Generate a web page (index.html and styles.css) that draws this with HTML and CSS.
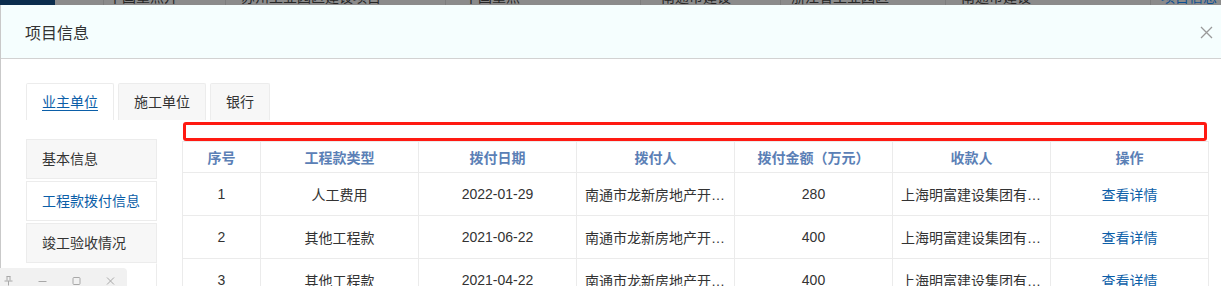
FILE: index.html
```html
<!DOCTYPE html>
<html lang="zh">
<head>
<meta charset="utf-8">
<title>项目信息</title>
<link rel="stylesheet" href="styles.css">
</head>
<body>
<div class="bg-bar">
  <div class="bg-logo"></div>
  <div class="bg-cell bg-icon"><span class="bg-dash"></span></div>
  <div class="bg-cell"><span>中国重点开</span></div>
  <div class="bg-cell"><span>苏州工业园区建设项目</span></div>
  <div class="bg-cell"><span>中国重点</span></div>
  <div class="bg-cell"><span>南通市建设</span></div>
  <div class="bg-cell"><span>浙江省工业园区</span></div>
  <div class="bg-cell"><span>南通市建设</span></div>
  <div class="bg-cell bg-link"><span>项目信息</span></div>
</div>

<div class="modal">
  <div class="modal-header">
    <span class="modal-title">项目信息</span>
    <span class="modal-close">
      <svg width="13" height="13" viewBox="0 0 13 13"><path d="M1 1L12 12M12 1L1 12" stroke="#9a9a9a" stroke-width="1.3" fill="none"/></svg>
    </span>
  </div>
  <div class="modal-body">
    <div class="tabs">
      <div class="tab tab-active"><span>业主单位</span></div>
      <div class="tab">施工单位</div>
      <div class="tab">银行</div>
    </div>
    <div class="content">
      <ul class="side-menu">
        <li class="menu-item">基本信息</li>
        <li class="menu-item menu-active">工程款拨付信息</li>
        <li class="menu-item">竣工验收情况</li>
        <li class="menu-item menu-blank"></li>
      </ul>
      <div class="table-wrap">
        <div class="highlight"></div>
        <table class="data-table">
          <colgroup>
            <col class="c-idx"><col class="c-w"><col class="c-w"><col class="c-w"><col class="c-w"><col class="c-w"><col class="c-w">
          </colgroup>
          <thead>
            <tr>
              <th>序号</th><th>工程款类型</th><th>拨付日期</th><th>拨付人</th><th>拨付金额（万元）</th><th>收款人</th><th>操作</th>
            </tr>
          </thead>
          <tbody>
            <tr>
              <td>1</td><td>人工费用</td><td>2022-01-29</td><td><div class="ellip">南通市龙新房地产开发有限公司</div></td><td>280</td><td><div class="ellip">上海明富建设集团有限公司</div></td><td><a class="link">查看详情</a></td>
            </tr>
            <tr>
              <td>2</td><td>其他工程款</td><td>2021-06-22</td><td><div class="ellip">南通市龙新房地产开发有限公司</div></td><td>400</td><td><div class="ellip">上海明富建设集团有限公司</div></td><td><a class="link">查看详情</a></td>
            </tr>
            <tr>
              <td>3</td><td>其他工程款</td><td>2021-04-22</td><td><div class="ellip">南通市龙新房地产开发有限公司</div></td><td>400</td><td><div class="ellip">上海明富建设集团有限公司</div></td><td><a class="link">查看详情</a></td>
            </tr>
          </tbody>
        </table>
      </div>
    </div>
  </div>
</div>

<div class="win-toolbar">
  <span class="win-btn"><svg width="9" height="10" viewBox="0 0 9 10"><path d="M2.5 0.5H6.5M3 0.5V4.5M6 0.5V4.5M0.5 5H8.5M4.5 5V9.5" stroke="#a8a8a8" stroke-width="1" fill="none"/></svg></span>
  <span class="win-btn"><svg width="9" height="10" viewBox="0 0 9 10"><path d="M0.5 5.5H8.5" stroke="#a8a8a8" stroke-width="1" fill="none"/></svg></span>
  <span class="win-btn"><svg width="9" height="10" viewBox="0 0 9 10"><rect x="1" y="1.5" width="7" height="7" rx="1" stroke="#a8a8a8" stroke-width="1" fill="none"/></svg></span>
  <span class="win-btn"><svg width="9" height="10" viewBox="0 0 9 10"><path d="M1 1.5L8 8.5M8 1.5L1 8.5" stroke="#a8a8a8" stroke-width="1" fill="none"/></svg></span>
</div>
</body>
</html>
```

FILE: styles.css
```css
* { box-sizing: border-box; }
html, body { margin: 0; padding: 0; }
body {
  width: 1221px;
  height: 286px;
  overflow: hidden;
  background: #ffffff;
  font-family: "Liberation Sans", "Noto Sans CJK SC", sans-serif;
  font-size: 14px;
  color: #333333;
  position: relative;
}

/* background page strip */
.bg-bar {
  height: 5px;
  overflow: hidden;
  background: #8b8b8b;
  display: grid;
  grid-template-columns: 55px 48px 122px 220px 195px 140px 165px 205px 1fr;
}
.bg-logo { background: #0b2d4d; }
.bg-cell {
  border-left: 1px solid #7d7d7d;
  padding-left: 4px;
  font-size: 14px;
  line-height: 14px;
  color: #262626;
  white-space: nowrap;
}
.bg-cell span { display: block; margin-top: -10px; }
.bg-cell:nth-child(4) { padding-left: 15px; }
.bg-cell:nth-child(5) { padding-left: 18px; }
.bg-cell:nth-child(6) { padding-left: 20px; }
.bg-cell:nth-child(7) { padding-left: 10px; }
.bg-cell:nth-child(8) { padding-left: 15px; }
.bg-cell:nth-child(9) { padding-left: 10px; }
.bg-icon { border-left: none; padding-left: 15px; }
.bg-dash { display: block; width: 12px; height: 1px; background: #6a6a6a; margin-top: 1px; }
.bg-link { color: #0c4f92; }

/* modal */
.modal {
  border-left: 1px solid #c9c9c9;
  height: 281px;
  overflow: hidden;
}
.modal-header {
  height: 54px;
  background: #f5fefe;
  border-bottom: 1px solid #d2d2d2;
  display: flex;
  align-items: center;
  justify-content: space-between;
  padding: 0 8px 0 24px;
}
.modal-title {
  font-size: 16px;
  color: #333333;
}
.modal-close {
  display: flex;
  width: 13px;
  height: 13px;
  margin-top: 1px;
}

.modal-body {
  padding: 24px 0 0 25px;
}

.tabs {
  display: flex;
  gap: 4px;
  height: 37px;
}
.tab {
  border: 1px solid #ececec;
  border-bottom: none;
  border-radius: 2px 2px 0 0;
  background: #f7f7f7;
  padding: 0 15px;
  line-height: 36px;
  color: #333333;
  font-size: 14px;
}
.tab-active {
  background: #ffffff;
  color: #0b5ea8;
}
.tab-active span {
  text-decoration: underline;
  text-underline-offset: 3px;
}

.content {
  display: flex;
  align-items: flex-start;
}

.side-menu {
  list-style: none;
  margin: 19px 0 0 0;
  padding: 0;
  width: 131px;
  display: flex;
  flex-direction: column;
  gap: 2px;
}
.menu-item {
  height: 40px;
  line-height: 38px;
  border: 1px solid #ececec;
  background: #f7f7f7;
  padding-left: 15px;
  color: #333333;
  font-size: 14px;
}
.menu-active {
  background: #ffffff;
  color: #0b5ea8;
}
.menu-blank {
  background: #ffffff;
  border-top-color: transparent;
  border-left-color: transparent;
  margin-top: -2px;
}

.table-wrap {
  position: relative;
  margin: 21px 0 0 25px;
}
.highlight {
  position: absolute;
  left: 1px;
  top: -19px;
  width: 1024px;
  height: 19px;
  border: 3px solid #ff1a12;
  border-radius: 3px;
  pointer-events: none;
}

.data-table {
  border-collapse: collapse;
  table-layout: fixed;
  width: 1026px;
}
.c-idx { width: 78px; }
.c-w { width: 158px; }
.data-table th,
.data-table td {
  border: 1px solid #ebebeb;
  text-align: center;
  padding: 0 8px;
  white-space: nowrap;
}
.data-table th {
  height: 31px;
  font-weight: bold;
  color: #5b80b6;
  font-size: 14px;
}
.data-table td {
  height: 43px;
  color: #333333;
  font-size: 14px;
}
.ellip {
  overflow: hidden;
  text-overflow: ellipsis;
  white-space: nowrap;
}
.link {
  color: #0b5ea8;
  text-decoration: none;
}

/* floating window toolbar */
.win-toolbar {
  position: absolute;
  left: 0;
  top: 268px;
  width: 127px;
  height: 18px;
  background: #f1f1f1;
  border-radius: 0 4px 0 0;
  display: flex;
  align-items: flex-end;
  padding: 0 0 0 4px;
  gap: 25px;
}
.win-btn {
  display: flex;
  width: 9px;
  height: 10px;
}
```
